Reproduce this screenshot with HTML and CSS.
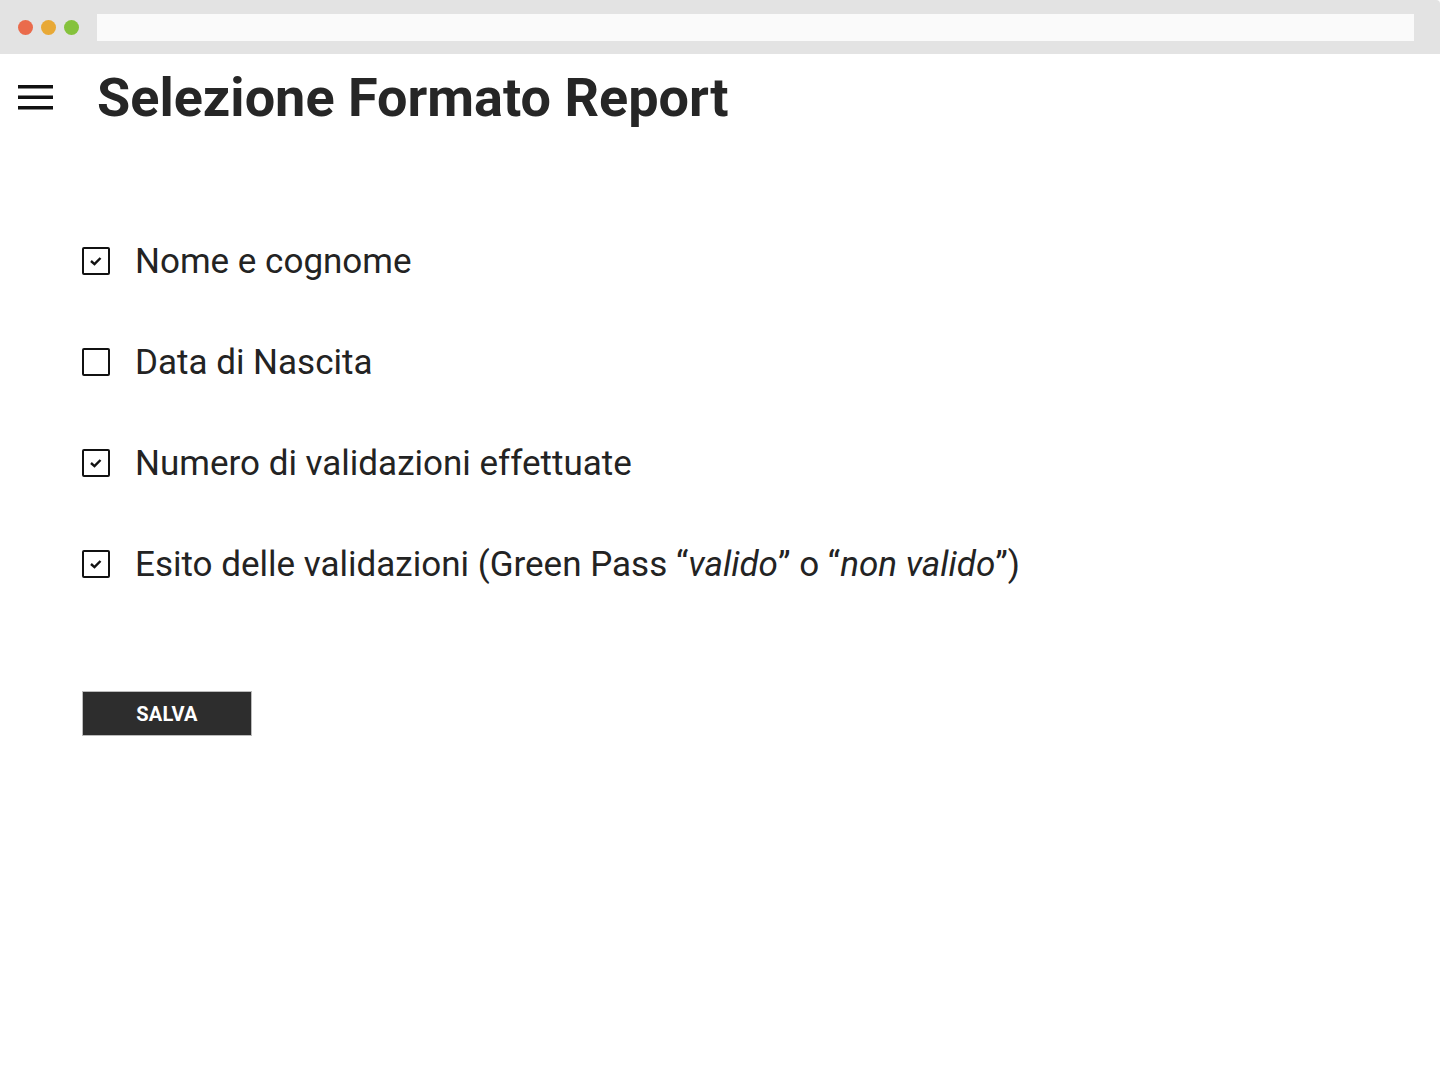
FILE: index.html
```html
<!DOCTYPE html>
<html lang="it">
<head>
<meta charset="utf-8">
<title>Selezione Formato Report</title>
<link rel="stylesheet" href="styles.css">
</head>
<body>
<div class="chrome">
  <div class="dots">
    <span class="dot red"></span>
    <span class="dot yellow"></span>
    <span class="dot green"></span>
  </div>
  <div class="address"></div>
</div>
<header class="header">
  <svg class="menu" width="36" height="26" viewBox="0 0 36 26">
    <rect x="0" y="0" width="35" height="3.5" fill="#111"/>
    <rect x="0" y="10.5" width="35" height="3.5" fill="#111"/>
    <rect x="0" y="21" width="35" height="3.5" fill="#111"/>
  </svg>
  <h1 class="title">Selezione Formato Report</h1>
</header>
<main class="content">
  <ul class="options">
    <li class="option">
      <span class="box checked"><svg width="14" height="10" viewBox="0 0 14 10"><path d="M2 5 L5.5 8.2 L11.5 2" fill="none" stroke="#111" stroke-width="2.4"/></svg></span>
      <span class="label">Nome e cognome</span>
    </li>
    <li class="option">
      <span class="box"></span>
      <span class="label">Data di Nascita</span>
    </li>
    <li class="option">
      <span class="box checked"><svg width="14" height="10" viewBox="0 0 14 10"><path d="M2 5 L5.5 8.2 L11.5 2" fill="none" stroke="#111" stroke-width="2.4"/></svg></span>
      <span class="label">Numero di validazioni effettuate</span>
    </li>
    <li class="option">
      <span class="box checked"><svg width="14" height="10" viewBox="0 0 14 10"><path d="M2 5 L5.5 8.2 L11.5 2" fill="none" stroke="#111" stroke-width="2.4"/></svg></span>
      <span class="label">Esito delle validazioni (Green Pass “<em>valido</em>” o “<em>non valido</em>”)</span>
    </li>
  </ul>
  <button class="save">SALVA</button>
</main>
</body>
</html>
```
FILE: styles.css
```css
* { box-sizing: border-box; }
html, body { margin: 0; padding: 0; background: #fff; }
body { font-family: Roboto, "Noto Sans", sans-serif; color: #232323; }

.chrome {
  height: 54px;
  background: #e3e3e3;
  display: flex;
  align-items: center;
  padding: 0 26px 0 18px;
  border-top-right-radius: 4px;
}
.dots { display: flex; gap: 8px; }
.dot { width: 15px; height: 15px; border-radius: 50%; display: block; }
.red { background: #ea6b4c; }
.yellow { background: #e8a936; }
.green { background: #85c23c; }
.address {
  margin-left: 18px;
  flex: 1;
  height: 27px;
  background: #fafafa;
  margin-top: 1px;
}

.header {
  display: flex;
  align-items: flex-start;
  padding: 0 0 0 18px;
  height: 102px;
}
.menu { display: block; margin-top: 31px; flex: none; }
.title {
  margin: 17px 0 0 43px;
  font-size: 54px;
  font-weight: 700;
  color: #262626;
  letter-spacing: 0;
  line-height: 1;
}

.content { padding: 0 0 0 82px; }
.options { list-style: none; margin: 91px 0 0 0; padding: 0; display: flex; flex-direction: column; gap: 73px; }
.option { display: flex; align-items: center; height: 28px; }
.box {
  width: 28px; height: 28px;
  border: 2px solid #111;
  border-radius: 2px;
  display: flex; align-items: center; justify-content: center;
  flex: none;
}
.box svg { display: block; }
.label {
  margin-left: 25px;
  font-size: 35px;
  color: #232323;
  line-height: 1;
}
.label em { font-style: italic; }

.save {
  margin-top: 113px;
  width: 170px;
  height: 45px;
  background: #2d2d2d;
  border: 1px solid #bcbcbc;
  color: #fff;
  font-family: Roboto, sans-serif;
  font-weight: 700;
  font-size: 20px;
  letter-spacing: 0.2px;
  padding: 0;
  display: block;
}
```
